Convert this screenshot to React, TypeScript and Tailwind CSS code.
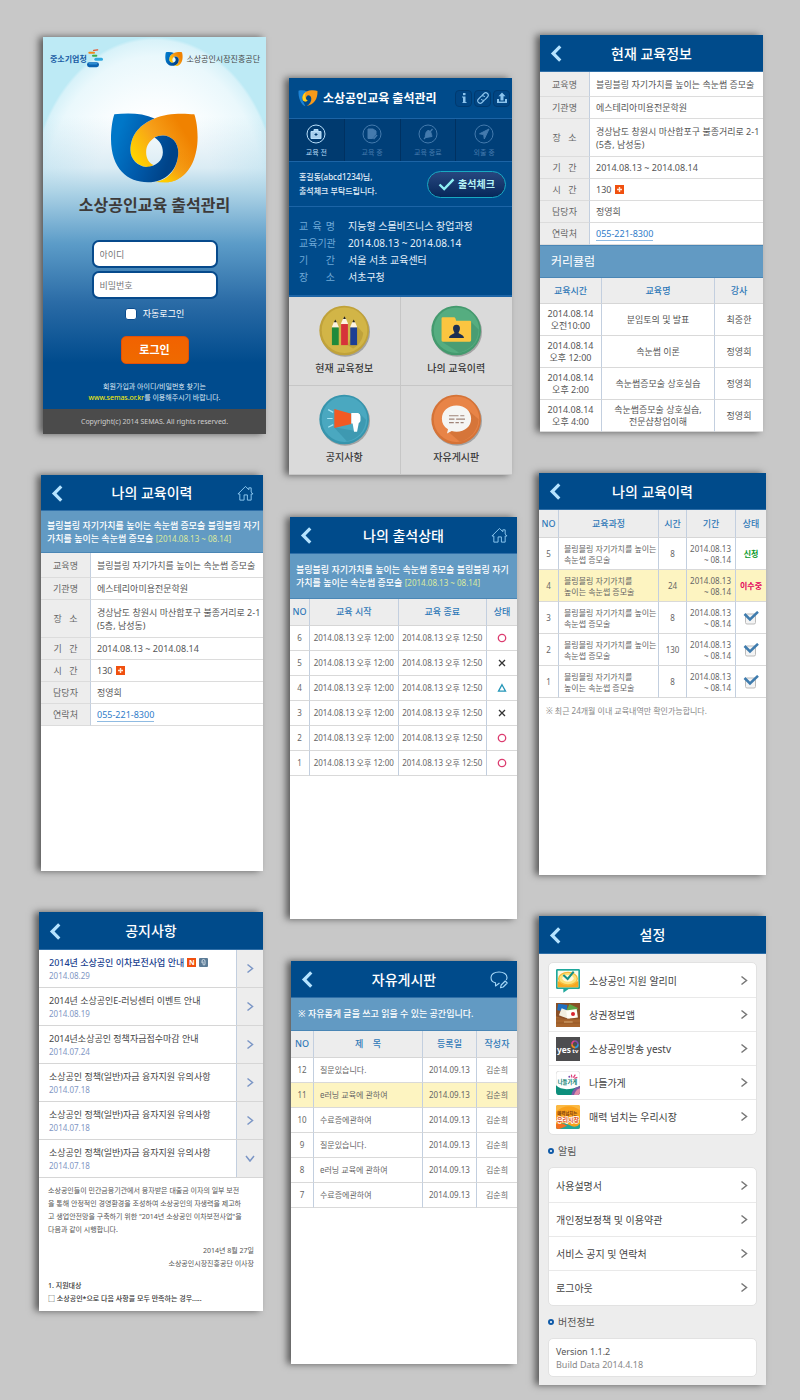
import type { ReactNode } from "react";

type CellProps = { children?: ReactNode; className?: string };

/* ---------- shared pieces ---------- */

function Panel({ label, className, children }: { label: string; className: string; children: ReactNode }) {
  return (
    <section
      aria-label={label}
      className={`flex flex-col shadow-[-4px_0_7px_rgba(0,0,0,0.55)] ${className}`}
    >
      {children}
    </section>
  );
}

function Header({ title, action, height = "h-[37px]" }: { title: string; action?: ReactNode; height?: string }) {
  return (
    <header className={`grid shrink-0 grid-cols-[32px_1fr_32px] items-center border-b border-[#2f6fa8] bg-[#004b8b] pt-px text-white ${height}`}>
      <button type="button" aria-label="뒤로" className="flex h-full items-center justify-center">
        <svg viewBox="0 0 12 18" className="h-[17px] w-3" fill="none" stroke="#b5e3ff" strokeWidth="3.4">
          <path d="M10.5 1.5 3 9l7.500 7.500" />
        </svg>
      </button>
      <h2 className="text-center text-[14px] leading-5 font-medium">{title}</h2>
      <div className="flex h-full items-center justify-center">{action}</div>
    </header>
  );
}

function HomeButton() {
  return (
    <button type="button" aria-label="홈" className="flex items-center pr-1">
      <svg viewBox="0 0 18 18" className="h-[17px] w-[17px]" fill="none" stroke="#8fcbf2" strokeWidth="1">
        <path d="M1 9.500 9 1.500l3.500 3.500V3h2.500v4.500l2 2h-2V16h-4v-5.500H7.500V16H3V9.500Z" strokeLinejoin="round" />
      </svg>
    </button>
  );
}

function WriteButton() {
  return (
    <button type="button" aria-label="글쓰기" className="flex items-center pr-1">
      <svg viewBox="0 0 18 18" className="h-[18px] w-[18px]" fill="none" stroke="#a5d8f8" strokeWidth="1.100" strokeLinejoin="round">
        <path d="M9.500 12 5.500 15v-3.200C3 11.300 1 9.300 1 6.500 1 3.300 4.300 1 9 1s8 2.300 8 5.500c0 1-.3 1.800-.8 2.500" />
        <path d="m10.500 16.800.7-2.800 4-4 2 2-4 4Z" />
      </svg>
    </button>
  );
}

function Emblem({ id, className }: { id: string; className: string }) {
  return (
    <svg viewBox="0 -2 260 209" className={className} aria-hidden="true">
      <defs>
        <linearGradient id={`${id}-o`} x1="0.1" y1="0.7" x2="0.8" y2="0.25">
          <stop offset="0" stopColor="#ffd200" />
          <stop offset="0.5" stopColor="#f7a11a" />
          <stop offset="1" stopColor="#f08200" />
        </linearGradient>
        <linearGradient id={`${id}-b`} x1="0.1" y1="0.3" x2="0.9" y2="0.6">
          <stop offset="0" stopColor="#0077c8" />
          <stop offset="0.5" stopColor="#005bac" />
          <stop offset="1" stopColor="#004388" />
        </linearGradient>
        <linearGradient id={`${id}-y`} x1="0.3" y1="1" x2="0.9" y2="0.2">
          <stop offset="0" stopColor="#ffcc00" />
          <stop offset="0.5" stopColor="#f39a10" stopOpacity="0.5" />
          <stop offset="1" stopColor="#f08200" stopOpacity="0" />
        </linearGradient>
      </defs>
      <path
        fill={`url(#${id}-o)`}
        d="M249 2C259 30 262 80 255 110C245 165 210 206 160 205L132 204C170 200 201 165 201 115C201 85 180 65 155 65C145 65 137 67 130 71C115 82 105 95 105 115C105 135 115 148 127 153C120 158 110 160 105 159C80 157 58 135 58 110C58 60 90 30 130 14C165-2 215-2 249 2Z"
      />
      <path
        fill={`url(#${id}-y)`}
        d="M257 100C245 165 210 206 160 205L132 204C170 200 201 165 201 115Z"
      />
      <path
        fill={`url(#${id}-b)`}
        d="M10 2C50-3 95-2 130 14C90 30 58 60 58 110C58 135 80 158 105 159C135 158 155 140 155 115C155 95 145 80 130 71C137 67 145 65 155 65C180 65 201 85 201 115C201 165 165 205 110 205C50 205 0 165 0 75C0 45 5 15 10 2Z"
      />
    </svg>
  );
}

function Chevron({ className }: { className: string }) {
  return (
    <svg viewBox="0 0 8 10" className={className} fill="none" stroke="currentColor" strokeWidth="1.500" aria-hidden="true">
      <path d="m1.500 1 5 4-5 4" />
    </svg>
  );
}

function Th({ children, className = "" }: CellProps) {
  return (
    <th scope="col" className={`border-r border-b border-r-[#c3cfdf] border-b-[#d6d6d6] bg-[#ededed] p-0 text-[9px] leading-3 font-medium text-[#3079b8] last:border-r-0 ${className}`}>
      {children}
    </th>
  );
}

function Td({ children, className = "" }: CellProps) {
  return (
    <td className={`border-r border-b border-r-[#c3cfdf] border-b-[#d9d9d9] p-0 text-center last:border-r-0 ${className}`}>
      {children}
    </td>
  );
}

/* ---------- login ---------- */

function AgencyMark() {
  return (
    <svg viewBox="0 0 48 56" className="h-[19px] w-4" aria-hidden="true">
      <rect x="18" y="1" width="16" height="4" rx="2" fill="#e8502a" transform="rotate(-8 26 3)" />
      <rect x="4" y="8" width="20" height="6" rx="3" fill="#f08a1c" />
      <rect x="15" y="17" width="16" height="6" rx="3" fill="#3fae49" />
      <rect x="22" y="26" width="26" height="9" rx="4.500" fill="#2fa9e0" />
      <rect x="0" y="39" width="36" height="15" rx="7" fill="#0b62b0" />
      <rect x="5" y="40" width="26" height="6" rx="3" fill="#2f8dd2" />
    </svg>
  );
}

function LoginScreen() {
  return (
    <Panel
      label="로그인"
      className="mr-px ml-1 min-h-[397px] bg-[#bdeaf5] bg-[linear-gradient(to_bottom,rgba(150,200,224,0)_20%,rgba(150,200,224,0.35)_33%,#add3e6_39%,#5c9cc8_52%,#2a6ba6_67%,#004b8d_82%),radial-gradient(ellipse_124px_160px_at_50%_160px,#ffffff_50%,#eaf8fc_88%,#d8f2f9_98%,#bdeaf500_100%)]"
    >
      <div className="flex items-center justify-between pt-3 pr-[6px] pl-[7px]">
        <div className="flex items-center">
          <span className="text-[8px] leading-3 font-bold text-[#1a5ca4]">중소기업청</span>
          <AgencyMark />
        </div>
        <div className="flex items-center gap-[3px]">
          <Emblem id="small" className="h-[14px] w-[18px]" />
          <span className="text-[8px] leading-3 text-[#444]">소상공인시장진흥공단</span>
        </div>
      </div>
      <Emblem id="large" className="mt-[45px] h-[70px] w-[87px] self-center" />
      <h1 className="mt-[10px] text-center text-[16px] leading-6 font-bold text-[#3d3a39]">소상공인교육 출석관리</h1>
      <form className="mt-[23px] flex flex-col items-center" onSubmit={(e) => e.preventDefault()}>
        <div className="flex w-[126px] flex-col gap-[3px]">
          <input
            type="text"
            aria-label="아이디"
            placeholder="아이디"
            className="h-[28px] w-full rounded-[7px] border-2 border-[#064a8c] bg-white px-[6px] text-[9px] leading-3 text-[#555] placeholder:text-[#777]"
          />
          <input
            type="password"
            aria-label="비밀번호"
            placeholder="비밀번호"
            className="h-[28px] w-full rounded-[7px] border-2 border-[#064a8c] bg-white px-[6px] text-[9px] leading-3 text-[#555] placeholder:text-[#777]"
          />
        </div>
        <label className="mt-[9px] flex items-center gap-[6px] text-[9px] leading-3 text-white">
          <input type="checkbox" className="h-3 w-3 appearance-none rounded-[3px] border border-[#0a4c8f] bg-white checked:bg-[#f26c00]" />
          자동로그인
        </label>
        <button
          type="submit"
          className="mt-4 h-[28px] w-[68px] rounded-[5px] border border-[#e2500a] bg-linear-to-b from-[#f26200] to-[#ef6a00] text-[11px] leading-4 font-bold text-white"
        >
          로그인
        </button>
      </form>
      <p className="mt-[17px] text-center text-[7px] leading-[11px] text-[#dfeaf5]">
        회원가입과 아이디/비밀번호 찾기는
        <br />
        <a href="#semas" className="text-[#fff200]">www.semas.or.kr</a>를 이용해주시기 바랍니다.
      </p>
      <footer className="mt-auto bg-[#4b4b4b] text-center text-[7px] leading-[25px] text-[#cfcfcf]">
        Copyright(c) 2014 SEMAS. All rights reserved.
      </footer>
    </Panel>
  );
}

/* ---------- main menu ---------- */

const infoRows = [
  { label: "교육명", value: "지능형 스몰비즈니스 창업과정" },
  { label: "교육기관", value: "2014.08.13 ~ 2014.08.14" },
  { label: "기간", value: "서울 서초 교육센터" },
  { label: "장소", value: "서초구청" },
];

function ToolButton({ label, children }: { label: string; children: ReactNode }) {
  return (
    <button type="button" aria-label={label} className="flex h-[17px] w-[17px] items-center justify-center rounded-sm border border-[#003a70] bg-[#014583] text-[#8cc3ec]">
      {children}
    </button>
  );
}

function StepTab({ label, active, children }: { label: string; active?: boolean; children: ReactNode }) {
  return (
    <button
      type="button"
      className={`flex flex-col items-center gap-1 border-r border-[#003161] pt-[5px] last:border-r-0 ${active ? "bg-[#003a6f] text-[#b9dffa]" : "bg-[#003f78] text-[#447aad]"}`}
    >
      <svg viewBox="0 0 20 20" className="h-[20px] w-[20px]" fill="none" stroke="currentColor" strokeWidth="1">
        <circle cx="10" cy="10" r="9" />
        {children}
      </svg>
      <span className="text-[7px] leading-[10px]">{label}</span>
    </button>
  );
}

function MenuTile({ label, children }: { label: string; children: ReactNode }) {
  return (
    <button type="button" className="flex h-[89px] flex-col items-center border-r border-b border-[#c6c6c6] bg-[#dadada] pt-2 even:border-r-0">
      <svg viewBox="0 0 150 150" className="h-[51px] w-[51px] overflow-visible">{children}</svg>
      <span className="mt-1 text-[10px] leading-4 font-medium text-[#3a3a3a]">{label}</span>
    </button>
  );
}

function Disc({ fill, rim }: { fill: string; rim: string }) {
  return (
    <>
      <circle cx="77" cy="79" r="73" fill="#8b8b8b" opacity="0.7" />
      <circle cx="74" cy="75" r="73" fill={rim} />
      <circle cx="75" cy="74" r="67" fill={fill} />
    </>
  );
}

function Pencil({ x, y, fill }: { x: number; y: number; fill: string }) {
  return (
    <g transform={`translate(${x} ${y})`}>
      <path d="M0 20 6 6h8l6 14v3H0Z" fill="#fdf3df" />
      <path d="m6 7 4-8 4 8Z" fill="#222" />
      <rect x="0" y="22" width="20" height={118 - y - 22} fill={fill} />
    </g>
  );
}

function MainScreen() {
  return (
    <Panel label="출석관리" className="mr-[5px] min-h-[397px] bg-[#004b8b]">
      <header className="flex h-10 items-center pr-[2px] pl-[9px]">
        <svg viewBox="0 0 60 52" className="h-[17px] w-5" aria-hidden="true">
          <path d="M1 2C10 0 20 1 29 5 16 10 11 20 14 32L22 50C8 44 0 24 1 2Z" fill="#1d83d4" />
          <path d="M14 30C10 14 22 2 40 1 47 0 54 1 59 3 60 28 48 44 26 49 36 43 41 34 40 25 38 16 30 14 26 19 22 24 24 31 29 33 22 37 16 35 14 30Z" fill="#f79a1a" />
          <path d="M14 30C11 20 15 12 23 7 20 17 20 27 29 33 22 37 16 35 14 30Z" fill="#ffd21f" />
        </svg>
        <h2 className="ml-[5px] pt-px text-[12px] leading-4 font-bold text-white">소상공인교육 출석관리</h2>
        <div className="ml-auto flex gap-[2px]">
          <ToolButton label="정보">
            <svg viewBox="0 0 12 12" className="h-3 w-3" fill="currentColor">
              <rect x="5" y="1" width="2.500" height="2.200" />
              <path d="M4 4.500h3.500V10H8.500v1h-4v-1H5V5.500H4Z" />
            </svg>
          </ToolButton>
          <ToolButton label="링크">
            <svg viewBox="0 0 24 24" className="h-3 w-3" fill="none" stroke="currentColor" strokeWidth="2.200" strokeLinecap="round">
              <path d="m10 7 4-4a4.600 4.600 0 0 1 7 7l-5 5a4.600 4.600 0 0 1-7 0" />
              <path d="m14 17-4 4a4.600 4.600 0 0 1-7-7l5-5a4.600 4.600 0 0 1 7 0" />
            </svg>
          </ToolButton>
          <ToolButton label="내보내기">
            <svg viewBox="0 0 12 12" className="h-3 w-3" fill="currentColor">
              <path d="m6 .5 3.500 3.800h-2V8.500h-3V4.300h-2Z" />
              <path d="M1 7h2v2.500h6V7h2v4H1Z" />
            </svg>
          </ToolButton>
        </div>
      </header>
      <nav className="grid h-[44px] grid-cols-4 border-y border-[#1c64a6]">
        <StepTab label="교육 전" active>
          <path d="M5 7.500h10v7H5ZM8 7.500V5.500h4v2" fill="currentColor" fillOpacity="0.9" />
          <path d="M10 9v3M8.500 10.500h3" stroke="#003a6f" />
        </StepTab>
        <StepTab label="교육 중">
          <path d="M6 5h5l3 2v3l-3.500 4.500H6Z" fill="currentColor" />
          <path d="m11.500 15 3.500-4" strokeWidth="1.500" />
        </StepTab>
        <StepTab label="교육 종료">
          <path d="M7 12c1-1 0-4 3-5.500 3 0 3.500 3.500 4 6L8 13.500Z" fill="currentColor" />
          <path d="m6 15 8.500-10" strokeWidth="1.200" />
        </StepTab>
        <StepTab label="외출 중">
          <path d="M15 5 5.500 9.800l4.200.8.600 4.400Z" fill="currentColor" />
        </StepTab>
      </nav>
      <div className="flex h-[45px] items-center justify-between border-b border-[#1c64a6] pr-[6px] pl-[10px]">
        <p className="text-[8px] leading-[14px] font-medium text-[#e6f1fb]">
          홍길동(abcd1234)님,
          <br />
          출석체크 부탁드립니다.
        </p>
        <button type="button" className="flex h-[27px] w-[79px] items-center justify-center gap-[3px] rounded-full border border-[#18a9c2] bg-linear-to-b from-[#27477f] to-[#06285a] text-[10px] leading-4 font-bold text-[#b5f3f6]">
          <svg viewBox="0 0 18 14" className="h-[13px] w-[17px]" fill="none" strokeWidth="2.600" aria-hidden="true">
            <path d="m1.500 7 5 5L16.500 1.500" stroke="#8ff0f4" />
          </svg>
          출석체크
        </button>
      </div>
      <dl className="flex h-[90px] flex-col justify-center gap-px border-b-2 border-[#1c64a6] px-[10px]">
        {infoRows.map((row) => (
          <div key={row.label} className="flex items-center gap-[13px] text-[10px] leading-4">
            <dt className="flex w-9 justify-between text-[#6fa9d8]">
              {row.label.split("").map((ch, i) => (
                <span key={i}>{ch}</span>
              ))}
            </dt>
            <dd className="text-[#e3effa]">{row.value}</dd>
          </div>
        ))}
      </dl>
      <div className="grid grid-cols-2">
        <MenuTile label="현재 교육정보">
          <Disc fill="#d2b547" rim="#c0a23a" />
          <path d="m110 60 20 22c-2 22-15 38-30 46l-16-10Z" fill="#a98c2c" opacity="0.450" />
          <Pencil x={38} y={44} fill="#1f8a3b" />
          <Pencil x={65} y={34} fill="#d6323a" />
          <Pencil x={92} y={44} fill="#1d3f94" />
        </MenuTile>
        <MenuTile label="나의 교육이력">
          <Disc fill="#55ad80" rim="#449a6e" />
          <path d="m118 50 22 22c0 35-25 62-58 68L32 108Z" fill="#3d8d65" opacity="0.500" />
          <path d="M31 40q0-4 4-4h32q4 0 5 4l2 6h40q4 0 4 4v54q0 4-4 4H35q-4 0-4-4Z" fill="#fbc540" />
          <path d="M75 58c8 0 11 6 10 13-1 6-4 8-4 11 3 4 15 4 16 15H53c1-11 13-11 16-15 0-3-3-5-4-11-1-7 2-13 10-13Z" fill="#1c2f52" />
        </MenuTile>
        <MenuTile label="공지사항">
          <Disc fill="#4aa8c0" rim="#3795ad" />
          <path d="m118 56 20 20c-2 35-26 58-56 63L44 98l60 10Z" fill="#318aa1" opacity="0.500" />
          <path d="m45 44 50 14v30L45 100Z" fill="#f15a24" />
          <path d="M95 56h20q7 2 7 10v12q0 5-5 7l-5 26h-9l-4-24h-4Z" fill="#fff" />
          <path d="m27 46 15 8M24 72h16M27 98l15-8" stroke="#a8e6f5" strokeWidth="3.500" />
        </MenuTile>
        <MenuTile label="자유게시판">
          <Disc fill="#e88447" rim="#d57337" />
          <path d="m112 50 28 24c-2 35-26 60-56 66L50 110Z" fill="#c4652c" opacity="0.500" />
          <path d="M75 34c25 0 43 17 43 39s-18 38-43 38c-5 0-10-1-14-2l-14 7 3-12C38 97 32 86 32 73c0-22 18-39 43-39Z" fill="#f5f5f3" />
          <path d="M53 64h28M86 64h12M53 74h16M74 74h26M53 84h14M72 84h10M87 84h9" stroke="#a08478" strokeWidth="3.500" />
        </MenuTile>
      </div>
    </Panel>
  );
}

/* ---------- course details ---------- */

function DetailRow({ label, height, children }: { label: string; height: string; children: ReactNode }) {
  return (
    <tr className={height}>
      <th scope="row" className="border-r border-b border-r-[#c3cfdf] border-b-[#dcdcdc] bg-[#ededed] p-0 font-normal text-[#666]">
        {label.length === 2 ? (
          <span className="mx-auto flex w-6 justify-between">
            <span>{label[0]}</span>
            <span>{label[1]}</span>
          </span>
        ) : (
          label
        )}
      </th>
      <td className="border-b border-[#dcdcdc] bg-white p-0 pl-[6px] whitespace-nowrap">{children}</td>
    </tr>
  );
}

function DetailTable() {
  return (
    <table className="w-full table-fixed border-separate border-spacing-0 text-[9px] leading-[13px] text-[#555]">
      <colgroup>
        <col className="w-[50px]" />
        <col />
      </colgroup>
      <tbody>
        <DetailRow label="교육명" height="h-[25px]">블링블링 자기가치를 높이는 속눈썹 증모술</DetailRow>
        <DetailRow label="기관명" height="h-[22px]">에스테리아미용전문학원</DetailRow>
        <DetailRow label="장소" height="h-[38px]">
          경상남도 창원시 마산합포구 불종거리로 2-1
          <br />
          (5층, 남성동)
        </DetailRow>
        <DetailRow label="기간" height="h-[22px]">2014.08.13 ~ 2014.08.14</DetailRow>
        <DetailRow label="시간" height="h-[22px]">
          <span className="flex items-center gap-1">
            130
            <button type="button" aria-label="시간 더보기" className="flex h-[9px] w-[9px] items-center justify-center bg-[#f0500f]">
              <svg viewBox="0 0 9 9" className="h-[9px] w-[9px]" stroke="#ffe9d8" strokeWidth="1.400">
                <path d="M4.500 2v5M2 4.500h5" />
              </svg>
            </button>
          </span>
        </DetailRow>
        <DetailRow label="담당자" height="h-[22px]">정영희</DetailRow>
        <DetailRow label="연락처" height="h-[22px]">
          <a href="tel:055-221-8300" className="border-b border-[#8fbbe2] text-[#2f7cc9]">055-221-8300</a>
        </DetailRow>
      </tbody>
    </table>
  );
}

function CourseBanner({ height }: { height: string }) {
  return (
    <p className={`flex flex-col justify-center border-b border-[#4a86b5] bg-[#629ac3] pl-[6px] text-[9px] leading-[13px] font-medium whitespace-nowrap text-white ${height}`}>
      <span>블링블링 자기가치를 높이는 속눈썹 증모술 블링블링 자기</span>
      <span>
        가치를 높이는 속눈썹 증모술 <span className="text-[8px] font-normal text-[#dcea9e]">[2014.08.13 ~ 08.14]</span>
      </span>
    </p>
  );
}

const lessons = [
  { time: ["2014.08.14", "오전10:00"], name: ["분임토의 및 발표"], teacher: "최중한" },
  { time: ["2014.08.14", "오후 12:00"], name: ["속눈썹 이론"], teacher: "정영희" },
  { time: ["2014.08.14", "오후 2:00"], name: ["속눈썹증모술 상호실습"], teacher: "정영희" },
  { time: ["2014.08.14", "오후 4:00"], name: ["속눈썹증모술 상호실습,", "전문샵창업이해"], teacher: "정영희" },
];

function Lines({ items }: { items: string[] }) {
  return (
    <>
      {items.map((t) => (
        <span key={t} className="block">{t}</span>
      ))}
    </>
  );
}

function CurrentCourseScreen() {
  return (
    <Panel label="현재 교육정보" className="mr-1 ml-px min-h-[397px] bg-white">
      <Header title="현재 교육정보" />
      <DetailTable />
      <h3 className="h-[33px] border-y border-[#4a86b5] bg-[#629ac3] pl-[11px] text-[12px] leading-[31px] text-white">커리큘럼</h3>
      <table className="w-full table-fixed border-separate border-spacing-0 text-[9px] leading-3 text-[#555]">
        <colgroup>
          <col className="w-[62px]" />
          <col />
          <col className="w-[48px]" />
        </colgroup>
        <thead>
          <tr className="h-[26px]">
            <Th>교육시간</Th>
            <Th>교육명</Th>
            <Th>강사</Th>
          </tr>
        </thead>
        <tbody>
          {lessons.map((l) => (
            <tr key={l.time[1]} className="h-8">
              <Td><Lines items={l.time} /></Td>
              <Td><Lines items={l.name} /></Td>
              <Td>{l.teacher}</Td>
            </tr>
          ))}
        </tbody>
      </table>
    </Panel>
  );
}

function CourseHistoryDetailScreen() {
  return (
    <Panel label="나의 교육이력 상세" className="mr-1 ml-[2px] min-h-[396px] bg-white">
      <Header title="나의 교육이력" action={<HomeButton />} height="h-9" />
      <CourseBanner height="h-[42px]" />
      <DetailTable />
    </Panel>
  );
}

/* ---------- attendance ---------- */

function Mark({ kind }: { kind: "O" | "X" | "T" }) {
  return (
    <svg viewBox="0 0 10 10" className="mx-auto h-[10px] w-[10px]" fill="none" strokeWidth="1.300" role="img" aria-label={kind === "O" ? "출석" : kind === "X" ? "결석" : "지각"}>
      {kind === "O" && <circle cx="5" cy="5" r="3.700" stroke="#dc3d70" />}
      {kind === "X" && <path d="m2 2 6 6M8 2 2 8" stroke="#333" />}
      {kind === "T" && <path d="m5 1.700 3.500 6.500h-7Z" stroke="#2496b8" />}
    </svg>
  );
}

const attendance: { no: number; mark: "O" | "X" | "T" }[] = [
  { no: 6, mark: "O" },
  { no: 5, mark: "X" },
  { no: 4, mark: "T" },
  { no: 3, mark: "X" },
  { no: 2, mark: "O" },
  { no: 1, mark: "O" },
];

function AttendanceScreen() {
  return (
    <Panel label="나의 출석상태" className="ml-px min-h-[402px] bg-white">
      <Header title="나의 출석상태" action={<HomeButton />} />
      <CourseBanner height="h-[45px]" />
      <table className="w-full table-fixed border-separate border-spacing-0 text-[8px] leading-3 text-[#666]">
        <colgroup>
          <col className="w-5" />
          <col />
          <col />
          <col className="w-[30px]" />
        </colgroup>
        <thead>
          <tr className="h-[27px]">
            <Th>NO</Th>
            <Th>교육 시작</Th>
            <Th>교육 종료</Th>
            <Th>상태</Th>
          </tr>
        </thead>
        <tbody>
          {attendance.map((a) => (
            <tr key={a.no} className="h-[25px]">
              <Td>{a.no}</Td>
              <Td className="whitespace-nowrap">2014.08.13 오후 12:00</Td>
              <Td className="whitespace-nowrap">2014.08.13 오후 12:50</Td>
              <Td><Mark kind={a.mark} /></Td>
            </tr>
          ))}
        </tbody>
      </table>
    </Panel>
  );
}

/* ---------- history list ---------- */

function CheckMark() {
  return (
    <svg viewBox="0 0 16 14" className="mx-auto h-[14px] w-4" fill="none" role="img" aria-label="이수완료">
      <rect x="2.500" y="3" width="10" height="10" rx="1.500" fill="#f4f4f4" stroke="#bbb" />
      <path d="m1.500 3 5.500 5.500L15 .8" stroke="#3f7cae" strokeWidth="2.500" />
    </svg>
  );
}

const history = [
  { no: 5, name: ["블링블링 자기가치를 높이는", "속눈썹 증모술"], hours: 8, status: "신청" },
  { no: 4, name: ["블링블링 자기가치를", "높이는 속눈썹 증모술"], hours: 24, status: "이수중" },
  { no: 3, name: ["블링블링 자기가치를 높이는", "속눈썹 증모술"], hours: 8, status: "" },
  { no: 2, name: ["블링블링 자기가치를 높이는", "속눈썹 증모술"], hours: 130, status: "" },
  { no: 1, name: ["블링블링 자기가치를", "높이는 속눈썹 증모술"], hours: 8, status: "" },
];

function HistoryListScreen() {
  return (
    <Panel label="나의 교육이력" className="mr-px min-h-[402px] bg-white">
      <Header title="나의 교육이력" />
      <table className="w-full table-fixed border-separate border-spacing-0 text-[8px] leading-[11px] text-[#666]">
        <colgroup>
          <col className="w-5" />
          <col />
          <col className="w-[28px]" />
          <col className="w-[49px]" />
          <col className="w-[30px]" />
        </colgroup>
        <thead>
          <tr className="h-[28px]">
            <Th>NO</Th>
            <Th>교육과정</Th>
            <Th>시간</Th>
            <Th>기간</Th>
            <Th>상태</Th>
          </tr>
        </thead>
        <tbody>
          {history.map((h) => (
            <tr key={h.no} className={`h-8 ${h.no === 4 ? "bg-[#fdf4c1]" : ""}`}>
              <Td>{h.no}</Td>
              <Td className="whitespace-nowrap">
                <div className="pl-[5px] text-left"><Lines items={h.name} /></div>
              </Td>
              <Td>{h.hours}</Td>
              <Td>
                <div className="pr-1 text-right"><Lines items={["2014.08.13", "~ 08.14"]} /></div>
              </Td>
              <Td>
                {h.status === "신청" && <span className="font-bold text-[#0a9a2c]">신청</span>}
                {h.status === "이수중" && <span className="font-bold text-[#e3005b]">이수중</span>}
                {h.status === "" && <CheckMark />}
              </Td>
            </tr>
          ))}
        </tbody>
      </table>
      <p className="px-[7px] pt-[7px] text-[8px] leading-3 text-[#888]">※ 최근 24개월 이내 교육내역만 확인가능합니다.</p>
    </Panel>
  );
}

/* ---------- notices ---------- */

const notices = [
  { title: "2014년 소상공인 이차보전사업 안내", date: "2014.08.29", isNew: true, open: false },
  { title: "2014년 소상공인E-러닝센터 이벤트 안내", date: "2014.08.19", isNew: false, open: false },
  { title: "2014년소상공인 정책자금접수마감 안내", date: "2014.07.24", isNew: false, open: false },
  { title: "소상공인 정책(일반)자금 융자지원 유의사항", date: "2014.07.18", isNew: false, open: false },
  { title: "소상공인 정책(일반)자금 융자지원 유의사항", date: "2014.07.18", isNew: false, open: false },
  { title: "소상공인 정책(일반)자금 융자지원 유의사항", date: "2014.07.18", isNew: false, open: true },
];

function NoticeScreen() {
  return (
    <Panel label="공지사항" className="mr-1 min-h-[399px] bg-white">
      <Header title="공지사항" height="h-[38px]" />
      <ul>
        {notices.map((n, i) => (
          <li key={i} className="border-b border-[#d6d6d6]">
            <button type="button" className="flex h-[37px] w-full items-stretch text-left">
              <span className="flex flex-1 flex-col justify-center pl-[10px]">
                <span className={`flex items-center gap-[3px] text-[9px] leading-[13px] whitespace-nowrap ${n.isNew ? "font-medium text-[#1a3f8f]" : "text-[#444]"}`}>
                  {n.title}
                  {n.isNew && (
                    <>
                      <span className="flex h-[9px] w-[9px] items-center justify-center bg-[#f0500f] text-[7px] leading-[9px] font-bold text-white">N</span>
                      <svg viewBox="0 0 9 9" className="h-[9px] w-[9px]" role="img" aria-label="첨부파일">
                        <rect width="9" height="9" rx="1" fill="#5b7b96" />
                        <path d="M3 5V3a1.500 1.500 0 0 1 3 0v3a1 1 0 0 1-2 0V3.500" fill="none" stroke="#e4edf4" strokeWidth=".8" />
                      </svg>
                    </>
                  )}
                </span>
                <span className="text-[8px] leading-[13px] text-[#7f97c4]">{n.date}</span>
              </span>
              <span className="flex w-[27px] items-center justify-center border-l border-[#c3cfdf] bg-[#ededed] text-[#7b96c6]">
                <Chevron className={n.open ? "h-[11px] w-2 rotate-90" : "h-[11px] w-2"} />
              </span>
            </button>
          </li>
        ))}
      </ul>
      <article className="px-[9px] pt-[6px] text-[7px] leading-[13px] text-[#555]">
        <p className="whitespace-nowrap">
          소상공인들이 민간금융기관에서 융자받은 대출금 이자의 일부 보전
          <br />
          을 통해 안정적인 경영환경을 조성하여 소상공인의 자생력을 제고하
          <br />
          고 생업안전망을 구축하기 위한 "2014년 소상공인 이차보전사업"을
          <br />
          다음과 같이 시행합니다.
        </p>
        <p className="mt-2 text-right">
          2014년 8월 27일
          <br />
          소상공인시장진흥공단 이사장
        </p>
        <p className="mt-[9px] font-medium text-[#333]">
          1. 지원대상
          <br />
          <span className="font-['Noto_Sans_CJK_KR',sans-serif]">□</span> 소상공인*으로 다음 사항을 모두 만족하는 경우.....
        </p>
      </article>
    </Panel>
  );
}

/* ---------- board ---------- */

const posts = [
  { no: 12, title: "질문있습니다." },
  { no: 11, title: "e러닝 교육에 관하여" },
  { no: 10, title: "수료증에관하여" },
  { no: 9, title: "질문있습니다." },
  { no: 8, title: "e러닝 교육에 관하여" },
  { no: 7, title: "수료증에관하여" },
];

function BoardScreen() {
  return (
    <Panel label="자유게시판" className="ml-[2px] min-h-[403px] bg-white">
      <Header title="자유게시판" action={<WriteButton />} />
      <p className="h-[33px] border-b border-[#4a86b5] bg-[#629ac3] pl-[7px] text-[9px] leading-8 font-medium text-white">
        ※ 자유롭게 글을 쓰고 읽을 수 있는 공간입니다.
      </p>
      <table className="w-full table-fixed border-separate border-spacing-0 text-[8px] leading-3 text-[#666]">
        <colgroup>
          <col className="w-[23px]" />
          <col />
          <col className="w-[54px]" />
          <col className="w-[40px]" />
        </colgroup>
        <thead>
          <tr className="h-[27px]">
            <Th>NO</Th>
            <Th>
              <span className="mx-auto flex w-[26px] justify-between">
                <span>제</span>
                <span>목</span>
              </span>
            </Th>
            <Th>등록일</Th>
            <Th>작성자</Th>
          </tr>
        </thead>
        <tbody>
          {posts.map((p) => (
            <tr key={p.no} className={`h-[25px] ${p.no === 11 ? "bg-[#fdf4c1]" : ""}`}>
              <Td>{p.no}</Td>
              <Td>
                <div className="pl-[6px] text-left">{p.title}</div>
              </Td>
              <Td>2014.09.13</Td>
              <Td>김순희</Td>
            </tr>
          ))}
        </tbody>
      </table>
    </Panel>
  );
}

/* ---------- settings ---------- */

const iconClass = "h-6 w-6 shrink-0";

function AlimiIcon() {
  return (
    <svg viewBox="0 0 72 72" className={iconClass} aria-hidden="true">
      <path d="M4 0h64q4 0 4 4v52q0 4-4 4H38L22 71V60H4q-4 0-4-4V4q0-4 4-4Z" fill="#1fa89c" />
      <rect x="5" y="5" width="62" height="50" fill="#fffbe6" />
      <path d="M5 35q30 25 62 0v20H5Z" fill="#f6a821" />
      <ellipse cx="36" cy="29" rx="28" ry="19" fill="#fce27a" stroke="#f6b93a" strokeWidth="4" />
      <ellipse cx="36" cy="28" rx="17" ry="10" fill="#fff8d8" />
      <path d="m22 18 13 12L53 8" fill="none" stroke="#12908a" strokeWidth="6" />
    </svg>
  );
}

function MarketInfoIcon() {
  return (
    <svg viewBox="0 0 72 72" className={iconClass} aria-hidden="true">
      <rect width="72" height="72" fill="#8a4f26" />
      <rect x="5" y="4" width="28" height="20" fill="#1f6fc0" transform="rotate(8 20 14)" />
      <rect x="34" y="8" width="28" height="24" fill="#5da646" transform="rotate(25 48 20)" />
      <rect x="12" y="22" width="34" height="22" fill="#f2eedf" transform="rotate(22 30 32)" />
      <rect x="32" y="20" width="32" height="26" fill="#fffdf5" transform="rotate(-8 48 33)" />
      <circle cx="51" cy="33" r="6" fill="#d9232e" />
      <path d="M0 40 26 48h46v24H0Z" fill="#a8662f" />
      <path d="M0 48h72M0 60h72" stroke="#8b5124" strokeWidth="2" />
      <path d="M24 57h26" stroke="#d8ad78" strokeWidth="3" />
    </svg>
  );
}

function YesTvIcon() {
  return (
    <svg viewBox="0 0 72 72" className={iconClass} aria-hidden="true">
      <rect width="72" height="72" fill="#4d4d4f" />
      <g fill="none" strokeWidth="5">
        <path d="M48 22a10 10 0 0 1 8-10" stroke="#e93f8b" />
        <path d="M56 12a10 10 0 0 1 10 10" stroke="#7d4fb0" />
        <path d="M66 22a10 10 0 0 1-9 10" stroke="#2b9be0" />
        <path d="M57 32a10 10 0 0 1-9-10" stroke="#f08a1c" />
      </g>
      <text x="3" y="47" fill="#fff" fontSize="25" fontWeight="700">yes</text>
      <text x="49" y="48" fill="#fff" fontSize="18" fontWeight="700">tv</text>
    </svg>
  );
}

function NadeulIcon() {
  return (
    <svg viewBox="0 0 72 72" className={iconClass} aria-hidden="true">
      <rect width="72" height="72" rx="10" fill="#fff" stroke="#d4d4d4" strokeWidth="2" />
      <path d="M0 43q24 22 72 2v17q0 10-10 10H10Q0 72 0 62Z" fill="#0d8f7c" />
      <path d="M46 72q4-22 26-27v17q0 10-10 10Z" fill="#7d5ba6" />
      <path d="M54 72q4-15 18-20v10q0 10-10 10Z" fill="#e08aa8" />
      <text x="5" y="38" fill="#0d7f72" fontSize="16" fontWeight="700">나들가게</text>
      <circle cx="40" cy="17" r="3" fill="#7d4fb0" />
      <path d="m48 20-2-9M52 20l6-9M55 22l9-3" stroke="#dd3a76" strokeWidth="3.500" />
    </svg>
  );
}

function OurMarketIcon() {
  return (
    <svg viewBox="0 0 72 72" className={iconClass} aria-hidden="true">
      <rect width="72" height="72" rx="6" fill="#f9a11b" />
      <path d="M0 20Q36-10 72 16V6q0-6-6-6H6Q0 0 0 6Z" fill="#fbb943" />
      <path d="M0 62q20-14 40-2t32-4v10q0 6-6 6H6q-6 0-6-6Z" fill="#23a69a" />
      <path d="M0 58q16-6 34 4L10 72H6q-6 0-6-6Z" fill="#f36f21" />
      <text x="4" y="30" fill="#7a3b10" fontSize="13" fontWeight="700">매력넘치는</text>
      <text x="3" y="51" fill="#e0531b" stroke="#fff" strokeWidth="4" paintOrder="stroke" fontSize="18" fontWeight="700">우리시장</text>
    </svg>
  );
}

const apps = [
  { name: "소상공인 지원 알리미", icon: <AlimiIcon /> },
  { name: "상권정보앱", icon: <MarketInfoIcon /> },
  { name: "소상공인방송 yestv", icon: <YesTvIcon /> },
  { name: "나들가게", icon: <NadeulIcon /> },
  { name: "매력 넘치는 우리시장", icon: <OurMarketIcon /> },
];

const links = ["사용설명서", "개인정보정책 및 이용약관", "서비스 공지 및 연락처", "로그아웃"];

function SettingRow({ name, icon }: { name: string; icon?: ReactNode }) {
  return (
    <li className="border-b border-[#e9e9e9] last:border-b-0">
      <a href="#setting" className="flex h-[33px] items-center gap-[9px] pr-2 pl-[7px] text-[10px] leading-4 text-[#444]">
        {icon}
        <span className="flex-1">{name}</span>
        <Chevron className="h-[11px] w-2 text-[#777]" />
      </a>
    </li>
  );
}

function SectionTitle({ children }: { children: ReactNode }) {
  return (
    <h3 className="flex h-8 items-center gap-1 text-[10px] leading-4 text-[#555]">
      <span className="h-[6px] w-[6px] rounded-full border-2 border-[#0f5aa8] bg-white" />
      {children}
    </h3>
  );
}

function SettingsScreen() {
  return (
    <Panel label="설정" className="mr-px min-h-[469px] bg-[#ededed]">
      <Header title="설정" height="h-[38px]" />
      <div className="px-[9px] pt-2">
        <ul className="rounded-[5px] border border-[#e2e2e2] bg-white py-px">
          {apps.map((a) => (
            <SettingRow key={a.name} name={a.name} icon={a.icon} />
          ))}
        </ul>
        <SectionTitle>알림</SectionTitle>
        <ul className="rounded-[5px] border border-[#e2e2e2] bg-white py-px">
          {links.map((name) => (
            <SettingRow key={name} name={name} />
          ))}
        </ul>
        <SectionTitle>버전정보</SectionTitle>
        <div className="flex h-[39px] flex-col justify-center rounded-[5px] border border-[#e2e2e2] bg-white px-[7px] text-[9px] leading-[13px]">
          <p className="text-[#555]">Version 1.1.2</p>
          <p className="text-[#888]">Build Data 2014.4.18</p>
        </div>
      </div>
    </Panel>
  );
}

export default function App() {
  return (
    <main
      lang="ko"
      className="grid min-h-screen grid-cols-1 gap-[22px] bg-[#c8c8c8] pr-[33px] pb-[15px] pl-[39px] font-['Noto_Sans','Noto_Sans_CJK_KR',sans-serif] sm:grid-cols-3"
    >
      <div className="flex flex-col gap-[41px] pt-[37px]">
        <LoginScreen />
        <CourseHistoryDetailScreen />
        <NoticeScreen />
      </div>
      <div className="flex flex-col gap-[42px] pt-[78px]">
        <MainScreen />
        <AttendanceScreen />
        <BoardScreen />
      </div>
      <div className="flex flex-col gap-[41px] pt-[35px]">
        <CurrentCourseScreen />
        <HistoryListScreen />
        <SettingsScreen />
      </div>
    </main>
  );
}
